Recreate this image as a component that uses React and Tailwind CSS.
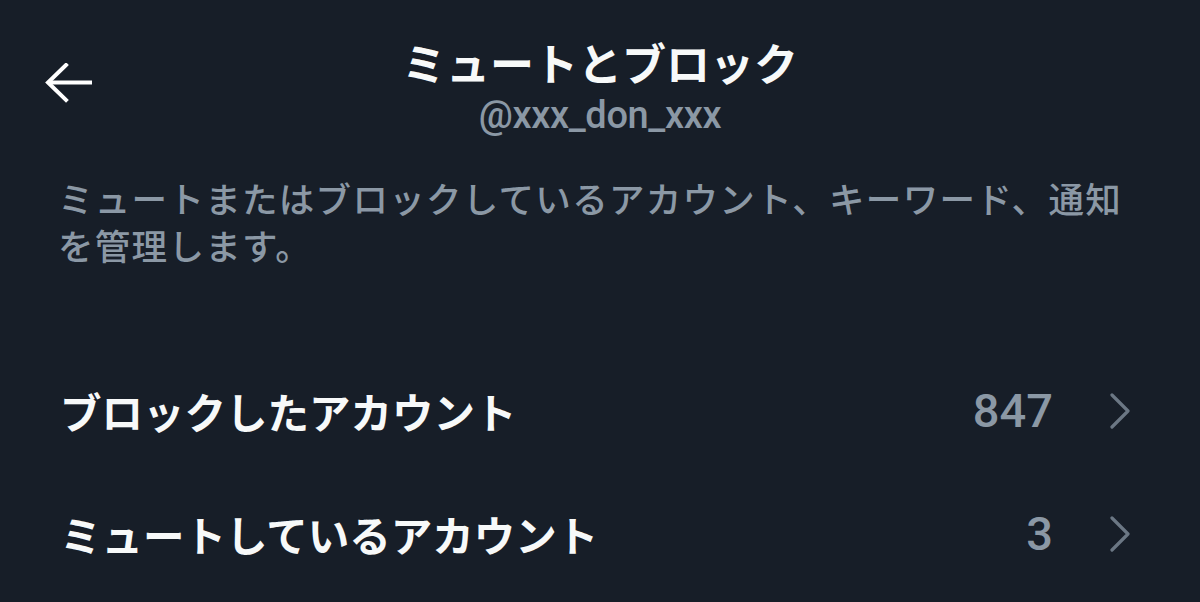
import React from "react";

function Row({ label, count }) {
  return (
    <div className="flex h-[123px] items-center pl-[60px] pr-[70px]">
      <div className="flex-1 text-[41.5px] font-bold leading-[48px] text-[#f7f9f9] font-['Noto_Sans_CJK_JP',sans-serif]">
        {label}
      </div>
      <div className="text-[47px] font-medium leading-[50px] text-[#8b98a5] font-['Roboto','Liberation_Sans',sans-serif]">
        {count}
      </div>
      <svg width="20" height="36" viewBox="0 0 20 36" className="ml-[57px]" fill="none">
        <polyline points="2,2 18,18 2,34" stroke="#6b7784" strokeWidth="3.2" strokeLinecap="round" strokeLinejoin="round" />
      </svg>
    </div>
  );
}

export default function App() {
  return (
    <div className="w-[1200px] h-[602px] overflow-hidden bg-[#171e28] flex flex-col">
      <div className="grid grid-cols-[1fr_auto_1fr] pt-[36px]">
        <div className="pl-[45px] pt-[27px]">
          <svg width="48" height="40" viewBox="0 0 48 40" fill="none">
            <path d="M47 19.5H3" stroke="#ffffff" strokeWidth="4" />
            <path d="M21 2L3 19.5L21 37" stroke="#ffffff" strokeWidth="4" strokeLinecap="square" strokeLinejoin="miter" />
          </svg>
        </div>
        <div className="flex flex-col items-center">
          <div className="text-[44px] font-bold leading-[52px] text-[#f7f9f9] font-['Noto_Sans_CJK_JP',sans-serif]">
            ミュートとブロック
          </div>
          <div className="mt-[7px] text-[38px] font-medium leading-[40px] tracking-[-0.01em] text-[#8b98a5] font-['Roboto','Liberation_Sans',sans-serif]">
            @xxx_don_xxx
          </div>
        </div>
        <div />
      </div>
      <div className="mt-[39px] pl-[58px] pr-[70px] text-[35.5px] font-medium leading-[47px] tracking-[1.3px] text-[#8b98a5] [text-spacing-trim:space-all] font-['Noto_Sans_CJK_JP',sans-serif]">
        ミュートまたはブロックしているアカウント、キーワード、通知を管理します。
      </div>
      <div className="mt-[81px] flex flex-col">
        <Row label="ブロックしたアカウント" count="847" />
        <Row label="ミュートしているアカウント" count="3" />
      </div>
    </div>
  );
}
